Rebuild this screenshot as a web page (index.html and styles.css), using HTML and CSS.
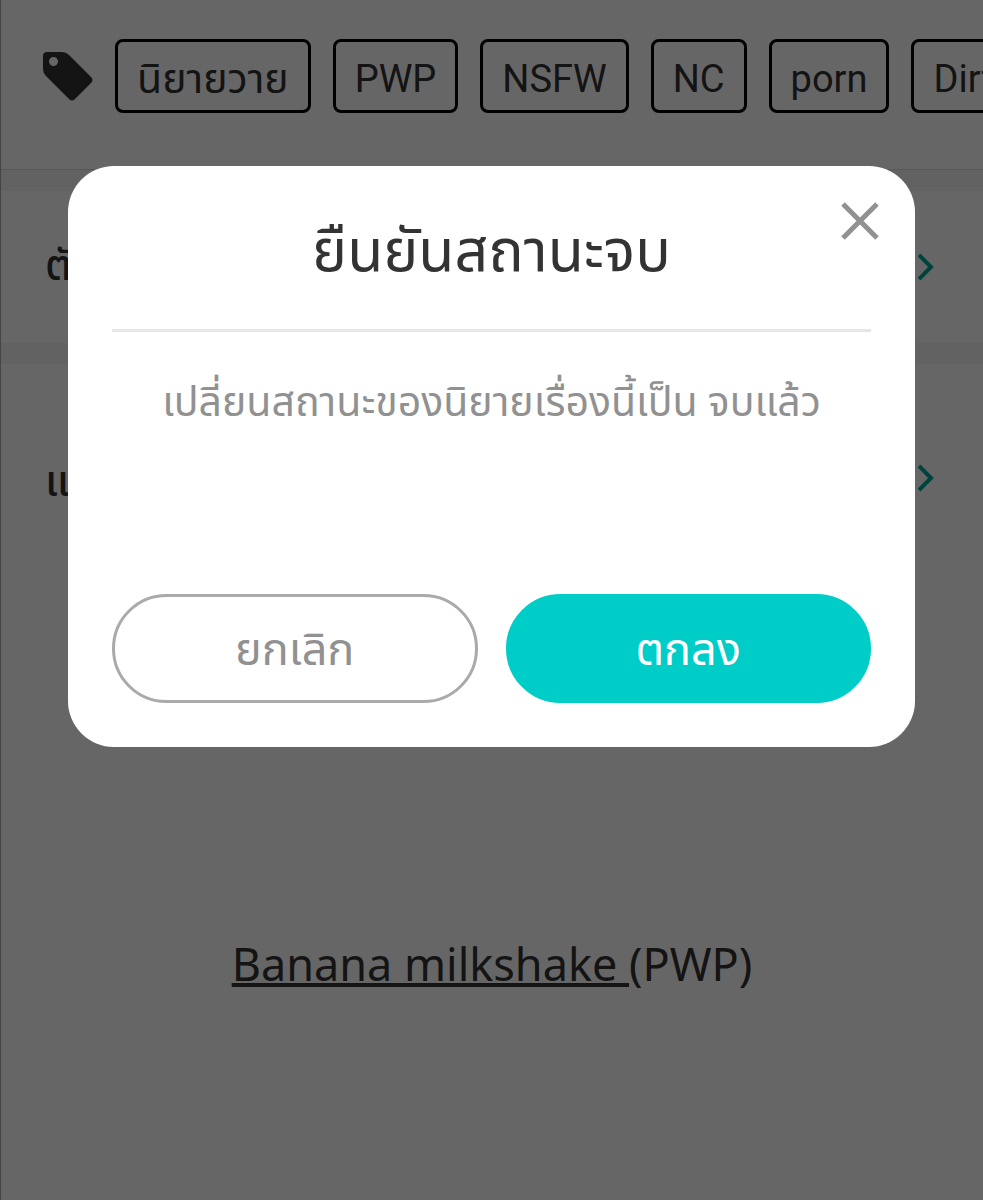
FILE: index.html
```html
<!DOCTYPE html>
<html lang="th">
<head>
    <meta charset="UTF-8">
    <meta name="viewport" content="width=device-width, initial-scale=1.0">
    <title>ยืนยันสถานะจบ</title>
    <link rel="stylesheet" href="styles.css">
</head>
<body>
    <main class="page">
        <div class="tags">
            <svg class="tag-icon" viewBox="0 0 50 50" aria-hidden="true">
                <path fill-rule="evenodd" d="M4 1H19Q23 1 26 4L48 26Q51 29 48 32L32 48Q29 51 26 48L3 25Q0 22 0 18V5Q0 1 4 1ZM10.500 6A4.500 4.500 0 1 0 10.500 15A4.500 4.500 0 1 0 10.500 6Z"/>
            </svg>
            <a class="tag tag-thai" href="#">นิยายวาย</a>
            <a class="tag" href="#">PWP</a>
            <a class="tag" href="#">NSFW</a>
            <a class="tag" href="#">NC</a>
            <a class="tag" href="#">porn</a>
            <a class="tag" href="#">Dirty</a>
        </div>
        <a class="row" href="#">
            <span>ตั</span>
            <svg class="chevron" viewBox="0 0 16 28" aria-hidden="true"><path d="M1 2L13 14L1 26"/></svg>
        </a>
        <section class="intro">
            <a class="row row-tall" href="#">
                <span>แ</span>
                <svg class="chevron" viewBox="0 0 16 28" aria-hidden="true"><path d="M1 2L13 14L1 26"/></svg>
            </a>
            <p class="story-title"><u>Banana milkshake </u>(PWP)</p>
        </section>
    </main>

    <div class="overlay">
        <div class="modal" role="dialog" aria-modal="true" aria-labelledby="modal-title">
            <button class="close" type="button" aria-label="ปิด">
                <svg viewBox="0 0 38 38" aria-hidden="true"><path d="M2 2L36 36M36 2L2 36"/></svg>
            </button>
            <h1 class="modal-title" id="modal-title">ยืนยันสถานะจบ</h1>
            <p class="message">เปลี่ยนสถานะของนิยายเรื่องนี้เป็น จบแล้ว</p>
            <div class="actions">
                <button class="btn btn-cancel" type="button">ยกเลิก</button>
                <button class="btn btn-ok" type="button">ตกลง</button>
            </div>
        </div>
    </div>
</body>
</html>
```
FILE: styles.css
```css
* {
    box-sizing: border-box;
}
html, body {
    height: 100%;
    margin: 0;
    overflow: hidden; /* No scrolling while the dialog is open */
}
body {
    font-family: Roboto, "Noto Sans Thai", "Noto Sans", sans-serif;
    color: #333;
    background: #fff;
}
a {
    color: inherit;
    text-decoration: none;
}
.page {
    min-height: 100%;
    background: #f5f5f5;
    border-left: 1px solid #aaa;
    display: flex;
    flex-direction: column;
    gap: 21px;
}

/* Tags */
.tags {
    display: flex;
    align-items: center;
    gap: 22px;
    height: 170px;
    padding: 0 0 17px 42px;
    background: #fff;
    border-bottom: 1px solid #ddd;
    overflow: hidden;
}
.tag-icon {
    flex: none;
    width: 50px;
    height: 50px;
    fill: #333;
}
.tag {
    flex: none;
    height: 74px;
    padding: 0 19px;
    border: 3px solid #000;
    border-radius: 8px;
    font-size: 38px;
    line-height: 74px;
}
.tag-thai {
    font-size: 41px;
}

/* Rows behind the dialog */
.row {
    display: flex;
    align-items: center;
    justify-content: space-between;
    height: 152px;
    padding: 0 49px 0 44px;
    background: #fff;
    font-size: 42px;
    font-weight: 500;
}
.row-tall {
    height: 228px;
}
.row-tall span {
    padding-top: 10px;
}
.chevron {
    width: 16px;
    height: 28px;
    fill: none;
    stroke: #00a896;
    stroke-width: 4;
}
.intro {
    flex: 1;
    background: #fff;
}
.story-title {
    margin: 340px 0 0;
    text-align: center;
    font-family: "Noto Sans", sans-serif;
    font-size: 45px;
    line-height: 64px;
}
.story-title u {
    text-decoration-thickness: 4px;
}

/* Dialog */
.overlay {
    position: fixed;
    inset: 0;
    padding: 166px 68px;
    background: rgba(0, 0, 0, 0.6);
}
.modal {
    position: relative;
    padding: 44px;
    background: #fff;
    border-radius: 46px;
}
.close {
    position: absolute;
    top: 36px;
    right: 36px;
    width: 38px;
    height: 38px;
    padding: 0;
    border: 0;
    background: none;
    cursor: pointer;
}
.close svg {
    display: block;
    stroke: #919191;
    stroke-width: 5;
}
.modal-title {
    margin: 0;
    padding-bottom: 37px;
    border-bottom: 3px solid #e6e6e6;
    text-align: center;
    font-size: 59px;
    font-weight: normal;
    line-height: 82px;
}
.message {
    margin: 40px 0 162px;
    text-align: center;
    color: #919191;
    font-size: 41px;
    line-height: 60px;
}
.actions {
    display: flex;
    gap: 28px;
}
.btn {
    flex: 1;
    height: 109px;
    padding: 4px 0 0;
    border: 3px solid #aaa;
    border-radius: 55px;
    font-family: inherit;
    font-size: 45px;
    cursor: pointer;
}
.btn-cancel {
    background: #fff;
    color: #919191;
}
.btn-ok {
    border-color: #00cdc8;
    background: #00cdc8;
    color: #fff;
}
```
